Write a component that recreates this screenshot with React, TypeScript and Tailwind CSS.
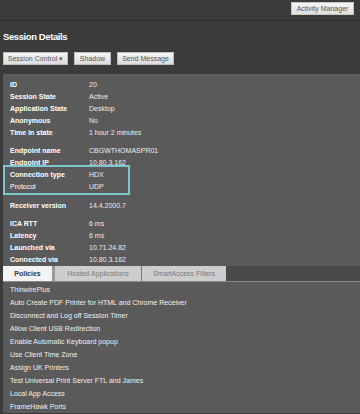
import React from "react";

const Row = ({ label, value, light }: { label: string; value: string; light?: boolean }) => (
  <div className="flex h-[12px] items-center">
    <div className={`w-[79px] shrink-0 text-white ${light ? "font-normal" : "font-bold"}`}>{label}</div>
    <div className="text-[#ececec]">{value}</div>
  </div>
);

const Btn = ({ children, w }: { children: React.ReactNode; w: string }) => (
  <div
    className={`${w} h-[13px] flex items-center justify-center bg-gradient-to-b from-[#f4f4f4] to-[#dcdcdc] border border-[#bdbdbd] text-[#555] text-[7px]`}
  >
    {children}
  </div>
);

const policies = [
  "ThinwirePlus",
  "Auto Create PDF Printer for HTML and Chrome Receiver",
  "Disconnect and Log off Session Timer",
  "Allow Client USB Redirection",
  "Enable Automatic Keyboard popup",
  "Use Client Time Zone",
  "Assign UK Printers",
  "Test Universal Print Server FTL and James",
  "Local App Access",
  "FrameHawk Ports",
];

export default function App() {
  return (
    <div className="w-[360px] h-[414px] overflow-hidden bg-[#3b3b3b] font-['Liberation_Sans',sans-serif] text-[7px] leading-none">
      {/* top bar */}
      <div className="h-[21px] border-b border-[#2e2e2e] flex justify-end pr-[6px] pt-[2px]">
        <div className="w-[63px] h-[13px] flex items-center justify-center bg-gradient-to-b from-[#f6f6f6] to-[#dedede] border border-[#c4c4c4] text-[#555] text-[7px]">
          Activity Manager
        </div>
      </div>
      {/* header */}
      <div className="pl-[3px] pt-[11px] h-[31px] text-[9.5px] tracking-[-0.4px] font-bold text-white">
        Session Details
      </div>
      <div className="flex pl-[3px] gap-[6px] h-[22px]">
        <Btn w="w-[65px]">Session Control ▾</Btn>
        <Btn w="w-[37px]">Shadow</Btn>
        <Btn w="w-[57px]">Send Message</Btn>
      </div>
      {/* panel */}
      <div className="ml-[3px] bg-[#5a5a5a] h-[339px] flex flex-col">
        <div className="pt-[4px] pl-[7px]">
          <Row label="ID" value="20" />
          <Row label="Session State" value="Active" />
          <Row label="Application State" value="Desktop" />
          <Row label="Anonymous" value="No" />
          <Row label="Time in state" value="1 hour 2 minutes" />
          <div className="h-[6px]" />
          <Row label="Endpoint name" value="CBGWTHOMASPR01" />
          <Row label="Endpoint IP" value="10.80.3.162" />
        </div>
        <div className="mt-[-3px] w-[127px] border-2 border-[#7cc6cf] pl-[5px] py-[1px] box-border">
          <Row label="Connection type" value="HDX" />
          <Row label="Protocol" value="UDP" light />
        </div>
        <div className="pl-[7px]">
          <div className="h-[4px]" />
          <Row label="Receiver version" value="14.4.2000.7" />
          <div className="h-[6px]" />
          <Row label="ICA RTT" value="6 ms" />
          <Row label="Latency" value="6 ms" />
          <Row label="Launched via" value="10.71.24.82" />
          <Row label="Connected via" value="10.80.3.162" />
        </div>
        {/* tabs */}
        <div className="mt-[1px] h-[16px] flex bg-[#4a4a4a] border-b border-[#8a8a8a]">
          <div className="w-[49px] h-[15px] flex items-center justify-center bg-[#f3f3f3] text-[#333] font-bold">
            Policies
          </div>
          <div className="w-[3px] bg-[#9a9a9a]" />
          <div className="w-[86px] h-[15px] flex items-center justify-center bg-[#cdcdcd] text-[#7a7a7a]">
            Hosted Applications
          </div>
          <div className="w-[1px] bg-[#777]" />
          <div className="w-[84px] h-[15px] flex items-center justify-center bg-[#cdcdcd] text-[#7a7a7a]">
            SmartAccess Filters
          </div>
        </div>
        <div className="pl-[7px] pt-[1px]">
          {policies.map((p) => (
            <div key={p} className="h-[13px] flex items-center text-[#f0f0f0]">
              {p}
            </div>
          ))}
        </div>
      </div>
    </div>
  );
}
